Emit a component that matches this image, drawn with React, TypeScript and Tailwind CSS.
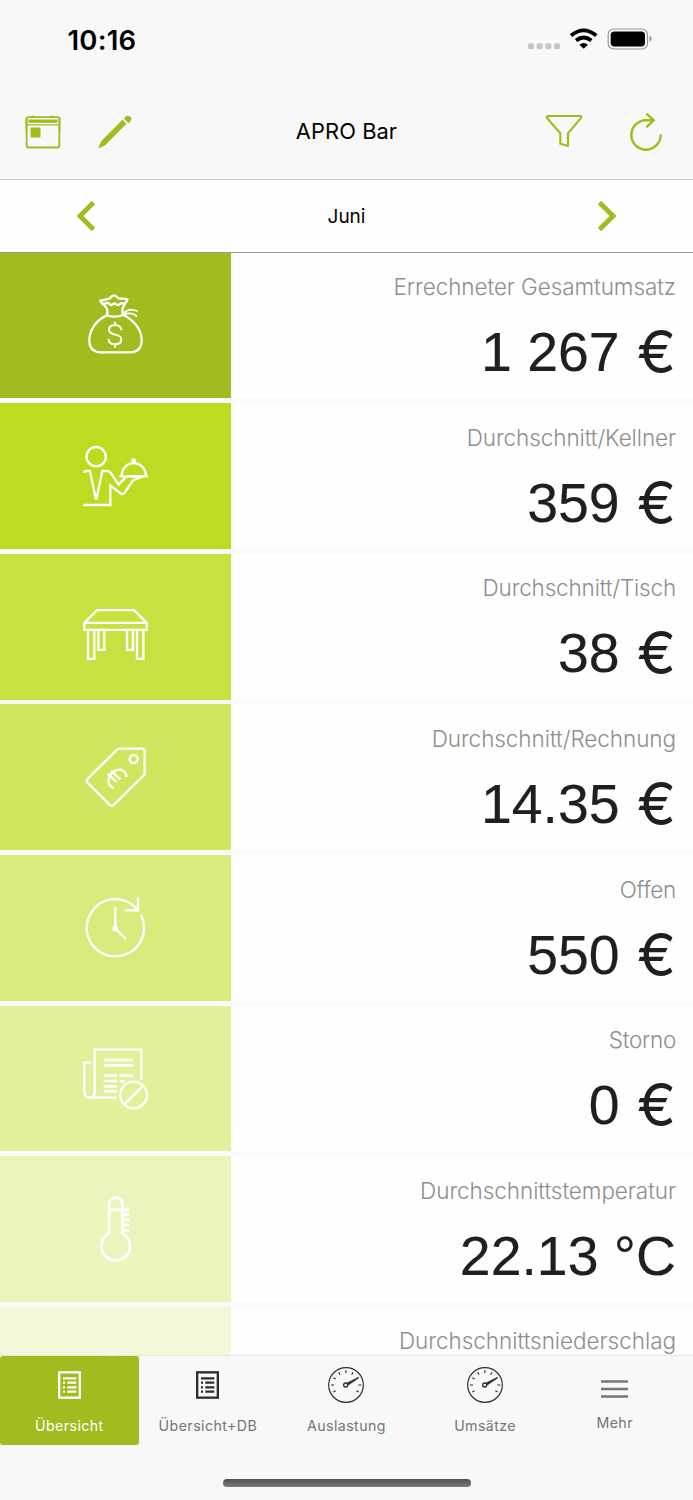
import type { ReactNode } from 'react';

type Row = {
  label: string;
  value?: string;
  unit?: string;
  tile: string;
  tracking: string;
  viewBox: string;
  icon: ReactNode;
};

const rows: Row[] = [
  {
    label: 'Errechneter Gesamtumsatz',
    value: '1 267',
    unit: '€',
    tile: 'bg-[#a2bb1e]',
    tracking: 'tracking-[-0.08px]',
    viewBox: '48 46 240 240',
    icon: (
      <>
        <path d="M140 137c-30 14-52 43-52 75 0 25 14 36 36 36h85c23 0 36-13 36-36 0-33-24-61-55-76-15 6-35 6-50 1z" />
        <path d="M141 136c4-13 1-21-8-29-6-5-11-10-12-14 11-3 20-3 27-6 5-3 8-10 14-10 5 0 8 6 14 9 7 2 15-1 26 3-1 8-8 13-11 19-4 8-6 16-2 28" />
        <path d="M126 101c9 4 13-4 20 0 7 6 9 7 14 1 4-4 8 3 12 4 7 1 8-7 15-5 4 1 7 1 11-1" />
        <path d="M189 132c9-12 29-15 44-7M193 135c13-6 29-5 38 6M194 130l13-10 8 1" strokeWidth="5" />
        <path d="M184 182c0-9-8-16-19-16s-18 6-18 14c0 20 37 10 37 29 0 10-8 15-19 15-12 0-19-6-19-16M165 156v11M165 223v11" strokeWidth="6" />
      </>
    ),
  },
  {
    label: 'Durchschnitt/Kellner',
    value: '359',
    unit: '€',
    tile: 'bg-[#bddb20]',
    tracking: 'tracking-[-0.1px]',
    viewBox: '48 33 240 240',
    icon: (
      <>
        <circle cx="108.500" cy="95" r="29" />
        <path d="M70 141q5-3 12-3h8l17 82h3l17-82h13q8 0 12 5l24 36 20-21q4-4 10-4h43l-24 9q-6 2-9 7l-21 32q-6 8-13 3l-31-23v58H70" />
        <path d="M178 154h86M185 152c2-50 70-50 73 0M221 113v-5" />
        <circle cx="221" cy="107" r="4" />
      </>
    ),
  },
  {
    label: 'Durchschnitt/Tisch',
    value: '38',
    unit: '€',
    tile: 'bg-[#c8e140]',
    tracking: 'tracking-[-0.18px]',
    viewBox: '48 -9.5 240 240',
    icon: (
      <path d="M73 98l38-38h111l38 38v21H73zM73 98h187M84 120v86h19v-86M115 120v59h18v-59M201 120v59h18v-59M231 120v86h19v-86" />
    ),
  },
  {
    label: 'Durchschnitt/Rechnung',
    value: '14.35',
    unit: '€',
    tile: 'bg-[#d1e65f]',
    tracking: 'tracking-[-0.07px]',
    viewBox: '48 37 240 240',
    icon: (
      <>
        <path d="M179 72h67q8 0 8 8v69l-92 91q-7 7-14 0l-65-66q-5-6 0-12l87-86q4-4 9-4z" />
        <circle cx="221" cy="103" r="12" />
        <path d="M200 156c-5-22-26-28-43-12s-16 38 5 46M144 147l25 25M154 139l27 26" />
      </>
    ),
  },
  {
    label: 'Offen',
    value: '550',
    unit: '€',
    tile: 'bg-[#d9eb7c]',
    tracking: 'tracking-[-0.3px]',
    viewBox: '48 23 240 240',
    icon: (
      <>
        <path d="M243 104A86 86 0 1 1 231 86M194 90h40V51M166 81v64l32 31" />
        <circle cx="166" cy="145" r="5" fill="currentColor" />
      </>
    ),
  },
  {
    label: 'Storno',
    value: '0',
    unit: '€',
    tile: 'bg-[#e2f09b]',
    tracking: 'tracking-[-0.3px]',
    viewBox: '48 25 240 240',
    icon: (
      <>
        <path d="M94 99H73v88c0 23 31 23 31 0V60h140v90M88 204h83" />
        <path strokeWidth="8" d="M131 91h87M131 107h87M131 138h40M179 138h39M131 154h40M179 155h15M131 170h40M131 185h40" />
        <circle cx="221" cy="196" r="40" />
        <path d="M193 224l56-56" />
      </>
    ),
  },
  {
    label: 'Durchschnittstemperatur',
    value: '22.13',
    unit: '°C',
    tile: 'bg-[#ebf4ba]',
    tracking: 'tracking-[-0.07px]',
    viewBox: '48 28 240 240',
    icon: (
      <path d="M147 161V74c0-27 40-27 40 0v87a43 43 0 1 1-40 0zM147 90h57M189 105h15M189 120h15M189 136h15M189 152h15" strokeWidth="8" strokeLinecap="round" />
    ),
  },
  {
    label: 'Durchschnittsniederschlag',
    tile: 'bg-[#f4f8d9]',
    tracking: 'tracking-[-0.04px]',
    viewBox: '10 -3 240 240',
    icon: <path d="M70 150a35 35 0 0 1 5-69c8-48 68-54 82-8 44-2 50 77 5 77zM80 180l-8 24M118 180l-8 24M156 180l-8 24" />,
  },
];

function Amount({ value, unit }: { value: string; unit?: string }) {
  return (
    <div className="mt-[17px] flex h-[64px] items-center justify-end whitespace-pre text-[55.4px] leading-[64px] text-[#1f1f1f] [-webkit-text-stroke:0.2px_#1f1f1f]">
      <span>{value} </span>
      {unit === '€' ? (
        <span className="ml-[2px] font-['Inter'] text-[58.500px] [-webkit-text-stroke:0]">€</span>
      ) : (
        <span>{unit}</span>
      )}
    </div>
  );
}

function StatusIcons() {
  return (
    <svg className="h-[30px] w-[130px]" viewBox="78 73.500 390 90" fill="none">
      <g fill="#c7c7c7">
        <rect x="84" y="131" width="18" height="18" rx="5" />
        <rect x="110" y="131" width="18" height="18" rx="5" />
        <rect x="136" y="131" width="18" height="18" rx="5" />
        <rect x="162" y="131" width="18" height="18" rx="5" />
      </g>
      <path d="M213 108q38-31 76 0M228 123q23-18 46 0" stroke="#000" strokeWidth="11" />
      <path d="M238 136q13-11 26 0l-13 12z" fill="#000" />
      <rect x="324.500" y="88.500" width="118" height="60" rx="17" stroke="#949494" strokeWidth="3.500" />
      <rect x="332" y="96" width="103" height="45" rx="11" fill="#000" />
      <path d="M449 109q6 3 6 9t-6 9z" fill="#8b8b8b" />
    </svg>
  );
}

function Header() {
  return (
    <header className="h-[180px] shrink-0 border-b border-[#c9c9c9] bg-[#f8f8f8]">
      <div className="flex h-[84px] items-center justify-between pb-[6px] pl-[67.500px] pr-[37px]">
        <span className="pt-[1px] text-[27.500px] font-semibold leading-[30px] tracking-[0.2px] text-black">10:16</span>
        <StatusIcons />
      </div>
      <div className="grid h-[95px] grid-cols-3 items-center">
        <div className="flex gap-[32px] pl-[22.500px] text-[#a2bb1e]">
          <svg className="size-10" viewBox="67.5 334.500 120 120" fill="none" stroke="currentColor">
            <rect x="78.500" y="350" width="98" height="91" rx="6" strokeWidth="5.500" />
            <path d="M79 373h98" strokeWidth="3.500" />
            <path d="M84 362h87" strokeWidth="10" />
            <path d="M77.500 352v40M177.500 352v40M93 348h9M151 348h9" strokeWidth="5" />
            <rect x="90" y="381" width="30" height="30" rx="3" fill="currentColor" stroke="none" />
          </svg>
          <svg className="size-10" viewBox="283.500 334.500 120 120" fill="currentColor">
            <path d="M293 444l9-22 64-64 12 12-64 64zM370 354l5-5c9-9 24 3 15 13l-6 6z" />
          </svg>
        </div>
        <h1 className="pb-[1px] text-center text-[21.8px] leading-[28px] tracking-[0.1px] text-black">APRO Bar</h1>
        <div className="flex justify-end gap-[42.5px] pr-[27px] text-[#a2bb1e]">
          <svg className="size-10" viewBox="130 336 120 120" fill="none" stroke="currentColor" strokeWidth="6.500" strokeLinejoin="round">
            <path d="M141 348h99q4 2 0 7l-38 45v38l-23-7v-31l-40-46q-3-4 2-6z" />
          </svg>
          <svg className="size-10" viewBox="378 335 120 120" fill="none" stroke="currentColor" strokeWidth="7.500">
            <path d="M482 402a44 44 0 1 1-44-42h22M439 340l22 20-22 21" />
          </svg>
        </div>
      </div>
    </header>
  );
}

function MonthBar() {
  return (
    <div className="flex h-[72.600px] shrink-0 items-center justify-between border-b border-[#999] bg-[#fefefe] px-[77px]">
      <svg className="h-[30px] w-[18px]" viewBox="0 0 18 30" fill="none" stroke="#a2bb1e" strokeWidth="4.800">
        <path d="M16.500 1.500L3 15l13.500 13.500" />
      </svg>
      <span className="pt-[2px] text-[19px] leading-[26px] tracking-[0px] text-black">Juni</span>
      <svg className="h-[30px] w-[18px]" viewBox="0 0 18 30" fill="none" stroke="#a2bb1e" strokeWidth="4.800">
        <path d="M1.500 1.500L15 15 1.500 28.500" />
      </svg>
    </div>
  );
}

function ListIcon() {
  return (
    <svg className="h-[28px] w-[23px]" viewBox="0 0 69 84" fill="none" stroke="currentColor">
      <rect x="3.500" y="4" width="62" height="76" strokeWidth="7" />
      <path d="M15 22h40M28 35h27M28 49h27M28 62h27M15 35h6M15 49h6M15 62h6" strokeWidth="7" />
    </svg>
  );
}

function GaugeIcon() {
  return (
    <svg className="size-9" viewBox="371 232 108 108" fill="none" stroke="#2d2d2d" strokeWidth="3.500">
      <circle cx="425" cy="286" r="52" />
      <circle cx="424" cy="286" r="6" strokeWidth="4" />
      <path d="M424.500 242v8M403 248l4 7M446 248l-4 7M387 264l7 4M380 286h9M387 307l7-4M462 286h9M456 303l7 4" />
      <path d="M428 280l34-17 1 2-31 21z" strokeWidth="2" fill="#2d2d2d" />
    </svg>
  );
}

const tabs = [
  { label: 'Übersicht', icon: <ListIcon />, active: true },
  { label: 'Übersicht+DB', icon: <ListIcon /> },
  { label: 'Auslastung', icon: <GaugeIcon /> },
  { label: 'Umsätze', icon: <GaugeIcon /> },
];

function TabBar() {
  return (
    <footer className="h-[145px] shrink-0 border-t border-[#e4e4e4] bg-[#f8f8f8]">
      <nav className="grid h-[89px] grid-cols-5 text-[14.2px] leading-[20px] tracking-[0.42px] text-[#757575]">
        {tabs.map((tab) => (
          <div
            key={tab.label}
            className={tab.active ? 'flex flex-col items-center rounded-[3px] bg-[#a2bb1e] text-white' : 'flex flex-col items-center'}
          >
            <div className={tab.active ? 'flex h-[60px] items-center pb-[2px] text-white' : 'flex h-[60px] items-center pb-[2px] text-[#2d2d2d]'}>
              {tab.icon}
            </div>
            <span>{tab.label}</span>
          </div>
        ))}
        <div className="flex flex-col items-center pr-[18px]">
          <div className="flex h-[57px] items-center pt-[9px]">
            <svg className="h-[18px] w-[27px]" viewBox="0 0 27 18" stroke="#757575" strokeWidth="2.300">
              <path d="M0 1.500h27M0 9h27M0 16.500h27" />
            </svg>
          </div>
          <span>Mehr</span>
        </div>
      </nav>
      <div className="mx-auto mt-[34px] h-[8px] w-[248px] rounded-full bg-linear-to-b from-[#505050] to-[#7a7a7a]" />
    </footer>
  );
}

export default function App() {
  return (
    <div className="flex h-[1500px] w-[693px] flex-col overflow-hidden bg-[#fafafa] font-['Inter',sans-serif]">
      <Header />
      <MonthBar />
      <main className="flex min-h-0 flex-1 flex-col gap-[4.800px] overflow-hidden">
        {rows.map((row) => (
          <section key={row.label} className="flex h-[145.800px] shrink-0 bg-[#fefefe]">
            <div className={`flex w-[231px] shrink-0 items-center justify-center ${row.tile}`}>
              <svg className="size-20 text-white" viewBox={row.viewBox} fill="none" stroke="currentColor" strokeWidth="7">
                {row.icon}
              </svg>
            </div>
            <div className="flex-1 pr-[17px] pt-[18.600px] text-right font-['Liberation_Sans',sans-serif]">
              <div className={`font-['Inter'] text-[22.500px] font-light leading-[32px] text-[#8e8e8e] ${row.tracking}`}>{row.label}</div>
              {row.value && <Amount value={row.value} unit={row.unit} />}
            </div>
          </section>
        ))}
      </main>
      <TabBar />
    </div>
  );
}
